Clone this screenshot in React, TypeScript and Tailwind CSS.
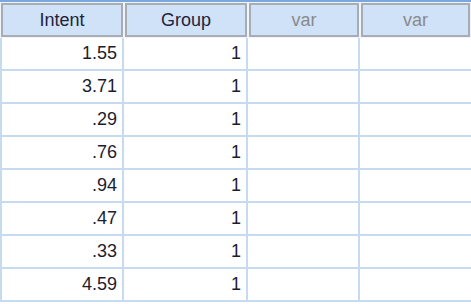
const rows = ["1.55", "3.71", ".29", ".76", ".94", ".47", ".33", "4.59"]

const cols = [
    { name: "Intent", w: "w-[124px]", muted: false },
    { name: "Group", w: "w-[124px]", muted: false },
    { name: "var", w: "w-[112px]", muted: true },
    { name: "var", w: "w-[111px]", muted: true },
]

export default function App() {
    return (
        <div className="w-[471px] h-[304px] overflow-hidden bg-white font-['Liberation_Sans',Arial,sans-serif]">
            <div className="flex h-[38px] border-t-2 border-[#7aa7dc] bg-[#eef4fc]">
                {cols.map((c, i) => (
                    <div key={i} className={`${c.w} shrink-0 p-px`}>
                        <div className={`h-full flex items-center justify-center border-2 border-[#a9adb3] bg-[#cfe2f8] text-[18px] ${c.muted ? "text-[#8a8a8a]" : "text-[#22223a]"}`}>
                            {c.name}
                        </div>
                    </div>
                ))}
            </div>
            {rows.map((v, r) => (
                <div key={r} className="flex h-[33px] border-b-2 border-[#c6daf0] border-l-2">
                    <div className="w-[122px] shrink-0 flex items-center justify-end pr-[5px] border-r-2 border-[#c6daf0] text-[18px] text-[#1c1c2e]">{v}</div>
                    <div className="w-[124px] shrink-0 flex items-center justify-end pr-[5px] border-r-2 border-[#c6daf0] text-[18px] text-[#1c1c2e]">1</div>
                    <div className="w-[112px] shrink-0 border-r-2 border-[#c6daf0]"></div>
                    <div className="flex-1"></div>
                </div>
            ))}
        </div>
    )
}
